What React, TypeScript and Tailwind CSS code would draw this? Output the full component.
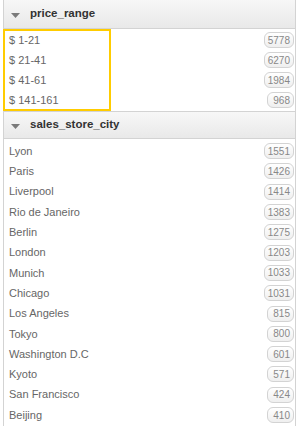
import React from 'react'

const PRICES: [string, number][] = [
  ['$ 1-21', 5778],
  ['$ 21-41', 6270],
  ['$ 41-61', 1984],
  ['$ 141-161', 968],
]

const CITIES: [string, number][] = [
  ['Lyon', 1551],
  ['Paris', 1426],
  ['Liverpool', 1414],
  ['Rio de Janeiro', 1383],
  ['Berlin', 1275],
  ['London', 1203],
  ['Munich', 1033],
  ['Chicago', 1031],
  ['Los Angeles', 815],
  ['Tokyo', 800],
  ['Washington D.C', 601],
  ['Kyoto', 571],
  ['San Francisco', 424],
  ['Beijing', 410],
]

function Header({ title, top }: { title: string; top?: boolean }) {
  return (
    <div
      className={
        'flex items-center bg-gradient-to-b from-[#f7f7f7] to-[#e9e9e9] border-b border-[#d3d3d3] ' +
        (top ? 'h-[29px]' : 'h-[28px] border-t')
      }
    >
      <svg width="9" height="5" viewBox="0 0 9 5" className="ml-[7px] mr-[10px] mt-[2px]">
        <path d="M0 0 L9 0 L4.5 5 Z" fill="#7a7a7a" />
      </svg>
      <span className="text-[11.5px] font-bold text-[#333]">{title}</span>
    </div>
  )
}

function Row({ label, count, h }: { label: string; count: number; h: string }) {
  return (
    <div className={'flex items-center justify-between pl-[5px] pr-[1px] ' + h}>
      <span className="text-[11px] text-[#666]">{label}</span>
      <span className="min-w-[27px] h-[16px] px-[3px] flex items-center justify-end text-[10px] text-[#888] border border-[#d3d3d3] rounded-[6px] bg-gradient-to-b from-white to-[#efefef]">
        {count}
      </span>
    </div>
  )
}

export default function App() {
  return (
    <div className="w-[300px] h-[426px] bg-white overflow-hidden" style={{ fontFamily: '"Liberation Sans", Arial, sans-serif' }}>
      <div className="ml-[3px] w-[293px] border-x border-[#d3d3d3] min-h-[426px]">
        <Header title="price_range" top />
        <div className="relative py-[1px]">
          {PRICES.map(([l, c]) => (
            <Row key={l} label={l} count={c} h="h-[20px]" />
          ))}
          <div className="absolute -left-[1px] top-[0px] w-[108px] h-[82px] border-2 border-[#ffcc00] pointer-events-none" />
        </div>
        <Header title="sales_store_city" />
        <div className="pt-[2px]">
          {CITIES.map(([l, c]) => (
            <Row key={l} label={l} count={c} h="h-[20.3px]" />
          ))}
        </div>
      </div>
    </div>
  )
}
